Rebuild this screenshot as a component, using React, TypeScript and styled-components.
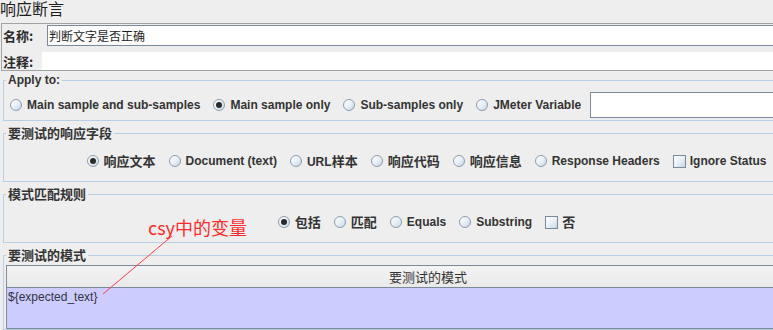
import React from "react";
import styled, { createGlobalStyle } from "styled-components";

const LATIN = `"Liberation Sans", Arial, "Noto Sans CJK SC", sans-serif`;
const CJK = `"Noto Sans CJK SC", "Liberation Sans", sans-serif`;

const GlobalStyle = createGlobalStyle`
  html, body { margin: 0; padding: 0; background: #eeeeee; overflow: hidden; }
  body { font-family: ${LATIN}; color: #333333; }
  * { box-sizing: border-box; }
`;

const Page = styled.div`
  position: relative;
  width: 850px;
  height: 330px;
  overflow: hidden;
`;

const Heading = styled.h1`
  margin: 0 0 6px 0;
  height: 17px;
  font: 400 16px/17px ${CJK};
  color: #1e1e1e;
`;

const InfoBox = styled.div`
  margin-left: 1px;
  border: 1px solid #a2a2a2;
  padding: 1px 0 0 1px;
  display: flex;
  flex-direction: column;
  gap: 6px;
`;

const InfoRow = styled.div<{ $h: number }>`
  display: flex;
  align-items: center;
  height: ${(p) => p.$h}px;
`;

const InfoLabel = styled.span<{ $w: number }>`
  flex: none;
  width: ${(p) => p.$w}px;
  font: 700 13px/1 ${CJK};
  color: #2a2a2a;
`;

const NameField = styled.div`
  flex: 1;
  align-self: stretch;
  border: 1px solid #7a8a99;
  background: #ffffff;
  padding-left: 1px;
  font: 400 12px/19px ${CJK};
  color: #1e1e1e;
`;

const CommentField = styled.div`
  flex: 1;
  align-self: stretch;
  background: #ffffff;
`;

const Group = styled.fieldset<{ $mt: number; $pt: number; $pb: number }>`
  margin: ${(p) => p.$mt}px 0 0 3px;
  padding: ${(p) => p.$pt}px 0 ${(p) => p.$pb}px 0;
  border: 1px solid #b8cfe5;
  min-width: 0;
`;

const Legend = styled.legend`
  margin-left: 2px;
  padding: 0 2px;
  height: 14px;
  font: 700 12px/14px ${LATIN};
  color: #333333;
`;

const Cjk = styled.span`
  font-family: ${CJK};
  font-size: 13px;
`;

const OptionRow = styled.div<{ $center?: boolean }>`
  display: flex;
  align-items: center;
  height: 26px;
  justify-content: ${(p) => (p.$center ? "center" : "flex-start")};
  padding-left: ${(p) => (p.$center ? 0 : 6)}px;
`;

const OptionList = styled.div`
  display: flex;
  align-items: center;
  gap: 13px;
`;

const Option = styled.span<{ $gap?: number }>`
  display: inline-flex;
  align-items: center;
  gap: ${(p) => p.$gap ?? 5}px;
  height: 18px;
  font: 700 12px/18px ${LATIN};
  color: #333333;
  white-space: nowrap;
`;

const RadioDot = styled.span<{ $on?: boolean }>`
  flex: none;
  width: 12px;
  height: 12px;
  border-radius: 50%;
  border: 1px solid #8d9cab;
  background: linear-gradient(135deg, #ffffff 0%, #e6eef6 55%, #c4d4e4 100%);
  display: inline-flex;
  align-items: center;
  justify-content: center;
  &::after {
    content: "";
    display: ${(p) => (p.$on ? "block" : "none")};
    width: 6px;
    height: 6px;
    border-radius: 50%;
    background: #2a2a2a;
  }
`;

const CheckBox = styled.span`
  flex: none;
  width: 13px;
  height: 13px;
  border: 1px solid #7a8a99;
  background: linear-gradient(135deg, #ffffff 0%, #e6eef6 55%, #c4d4e4 100%);
`;

const VarInput = styled.div`
  flex: 1;
  height: 26px;
  margin: 0 8px 0 9px;
  border: 1px solid #7a8a99;
  background: #ffffff;
`;

const PatternTable = styled.div`
  margin-left: 2px;
  border-top: 1px solid #7a8a99;
  border-left: 1px solid #7a8a99;
`;

const PatternHeader = styled.div`
  height: 22px;
  border-bottom: 1px solid #7a8a99;
  background: linear-gradient(#f4f4f4, #e9e9e9);
  display: flex;
  align-items: center;
  justify-content: center;
  font: 400 13px/1 ${CJK};
  color: #333333;
`;

const PatternRow = styled.div`
  height: 41px;
  border-bottom: 1px solid #7a8a99;
  background: #ccccff;
  padding: 2px 0 0 1px;
  font: 400 12px/15px ${LATIN};
  color: #333344;
`;

const Annotation = styled.div`
  position: absolute;
  left: 148px;
  top: 216px;
  font: 400 18px/22px ${CJK};
  color: #ff2b2b;
  white-space: nowrap;
`;

const Pointer = styled.svg`
  position: absolute;
  left: 0;
  top: 0;
  pointer-events: none;
`;

type RadioProps = { on?: boolean; children: React.ReactNode };
const Radio = ({ on, children }: RadioProps) => (
  <Option>
    <RadioDot $on={on} />
    <span>{children}</span>
  </Option>
);

const Check = ({ children }: { children: React.ReactNode }) => (
  <Option $gap={4}>
    <CheckBox />
    <span>{children}</span>
  </Option>
);

export default function App() {
  return (
    <>
      <GlobalStyle />
      <Page>
        <Heading>响应断言</Heading>
        <InfoBox>
          <InfoRow $h={21}>
            <InfoLabel $w={44}>名称:</InfoLabel>
            <NameField>判断文字是否正确</NameField>
          </InfoRow>
          <InfoRow $h={18}>
            <InfoLabel $w={39}>注释:</InfoLabel>
            <CommentField />
          </InfoRow>
        </InfoBox>

        <Group $mt={2} $pt={5} $pb={2}>
          <Legend>Apply to:</Legend>
          <OptionRow>
            <OptionList>
              <Radio>Main sample and sub-samples</Radio>
              <Radio on>Main sample only</Radio>
              <Radio>Sub-samples only</Radio>
              <Radio>JMeter Variable</Radio>
            </OptionList>
            <VarInput />
          </OptionRow>
        </Group>

        <Group $mt={5} $pt={8} $pb={7}>
          <Legend>
            <Cjk>要测试的响应字段</Cjk>
          </Legend>
          <OptionRow $center>
            <OptionList>
              <Radio on>
                <Cjk>响应文本</Cjk>
              </Radio>
              <Radio>Document (text)</Radio>
              <Radio>
                URL<Cjk>样本</Cjk>
              </Radio>
              <Radio>
                <Cjk>响应代码</Cjk>
              </Radio>
              <Radio>
                <Cjk>响应信息</Cjk>
              </Radio>
              <Radio>Response Headers</Radio>
              <Check>Ignore Status</Check>
            </OptionList>
          </OptionRow>
        </Group>

        <Group $mt={5} $pt={8} $pb={7}>
          <Legend>
            <Cjk>模式匹配规则</Cjk>
          </Legend>
          <OptionRow $center>
            <OptionList>
              <Radio on>
                <Cjk>包括</Cjk>
              </Radio>
              <Radio>
                <Cjk>匹配</Cjk>
              </Radio>
              <Radio>Equals</Radio>
              <Radio>Substring</Radio>
              <Check>
                <Cjk>否</Cjk>
              </Check>
            </OptionList>
          </OptionRow>
        </Group>

        <Group $mt={5} $pt={3} $pb={0}>
          <Legend>
            <Cjk>要测试的模式</Cjk>
          </Legend>
          <PatternTable>
            <PatternHeader>要测试的模式</PatternHeader>
            <PatternRow>{"${expected_text}"}</PatternRow>
          </PatternTable>
        </Group>

        <Annotation>csy中的变量</Annotation>
        <Pointer width="850" height="330" viewBox="0 0 850 330">
          <line x1="172" y1="236" x2="103" y2="294" stroke="#ff3c50" strokeWidth="1" />
        </Pointer>
      </Page>
    </>
  );
}
